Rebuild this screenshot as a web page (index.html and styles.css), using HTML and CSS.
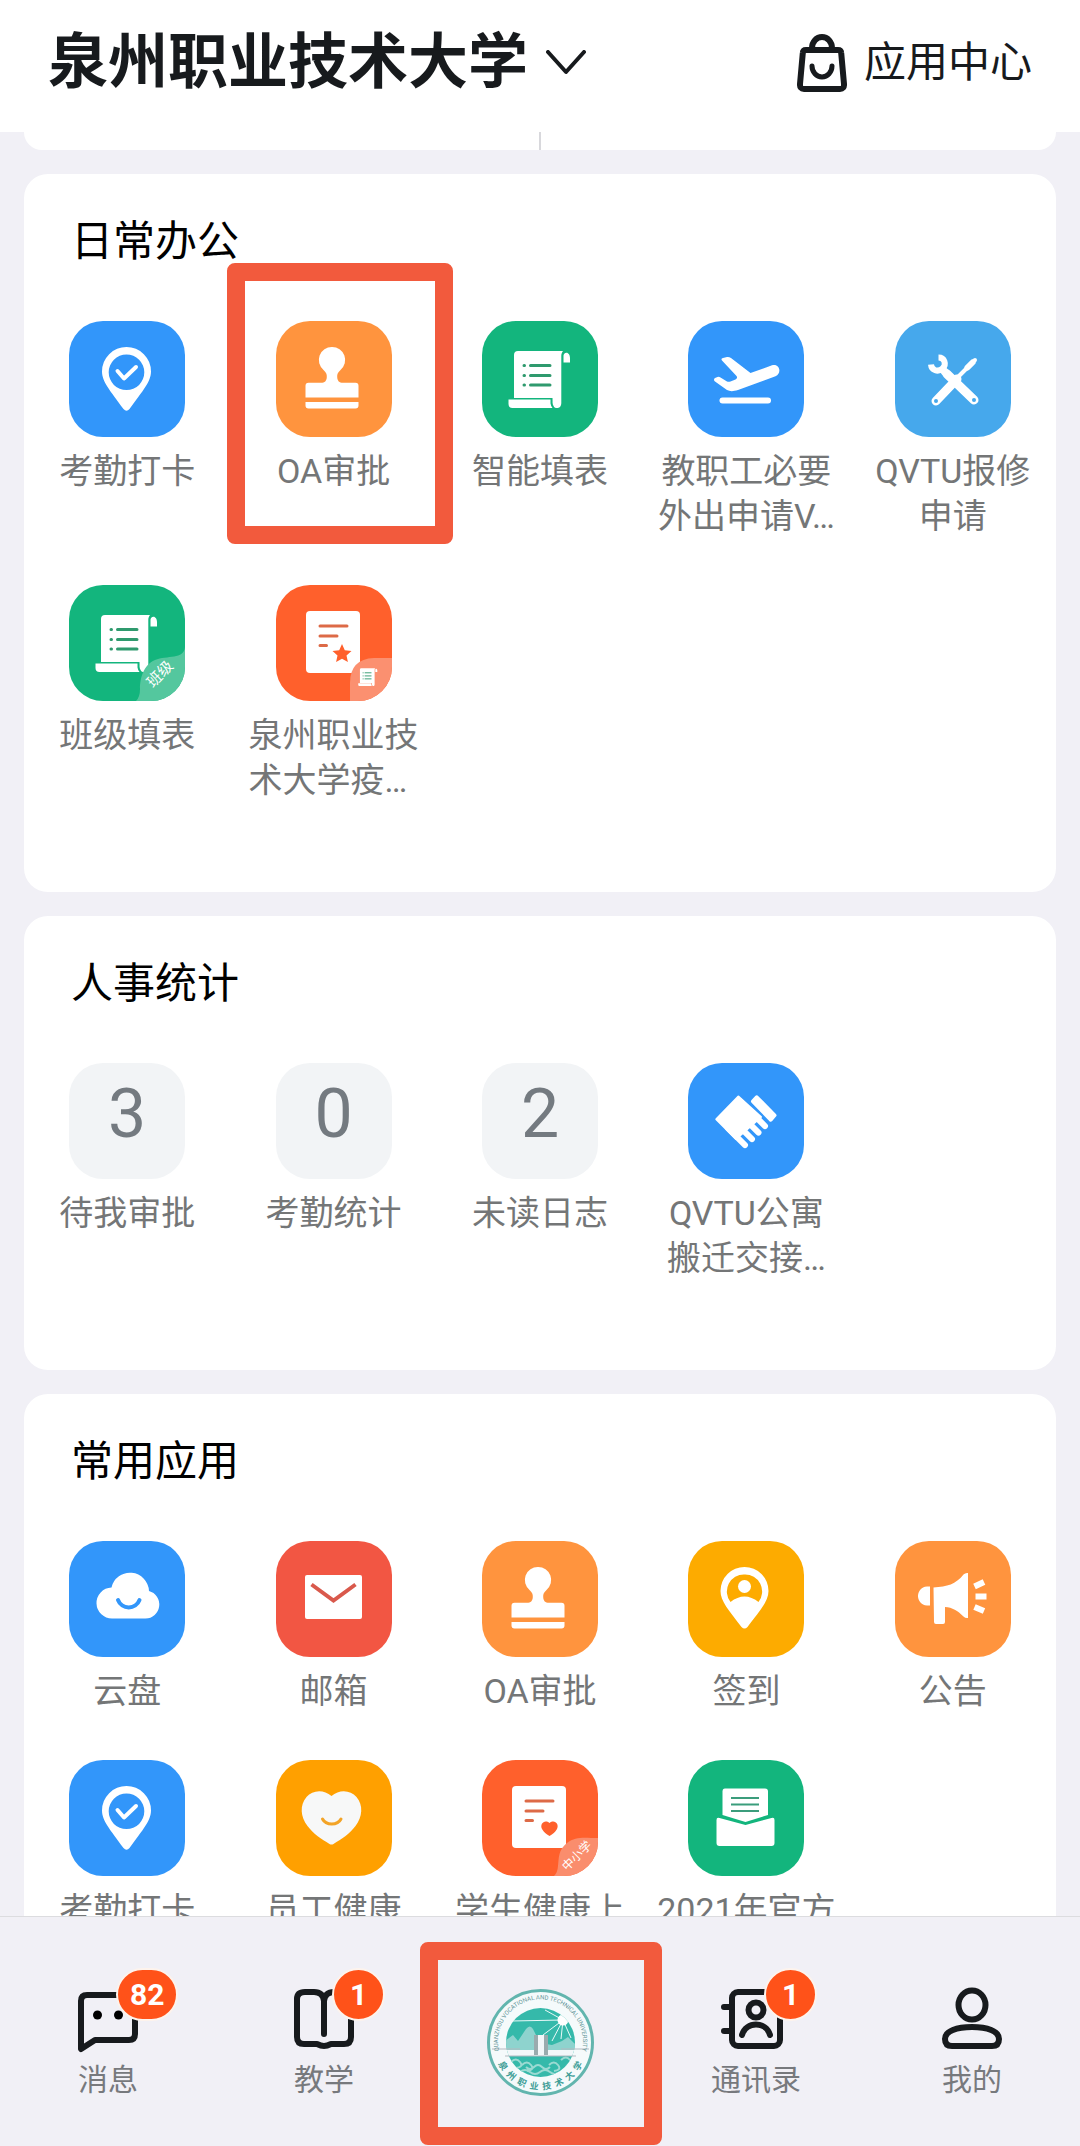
FILE: index.html
```html
<!DOCTYPE html>
<html lang="zh-CN">
<head>
<meta charset="utf-8">
<meta name="viewport" content="width=device-width, initial-scale=1">
<title>泉州职业技术大学</title>
<link rel="stylesheet" href="styles.css">
</head>
<body>
<svg class="sprite" aria-hidden="true">
  <symbol id="i-pin" viewBox="0 0 116 116">
    <path fill="#fff" fill-rule="evenodd" d="M57.500 26a24.500 24.500 0 0 1 24.500 24.500c0 10-8 19-21.500 37.500q-3 3.500-6 0C41 69.500 33 60.500 33 50.500A24.500 24.500 0 0 1 57.500 26zM57.500 33.500a17.800 17.800 0 1 0 0 35.600a17.800 17.800 0 0 0 0-35.600z"/>
    <path fill="none" stroke="#fff" stroke-width="4" stroke-linecap="round" stroke-linejoin="round" d="M48.500 50l6.500 7.500L67 46"/>
  </symbol>
  <symbol id="i-stamp" viewBox="0 0 116 116">
    <path fill="#fff" d="M56 26a13 13 0 0 1 8.500 23c-2.500 2.500-3.500 4-3.300 7 .2 4 2 5.800 5.800 5.800h12.500q3 0 3 3v11.700h-53V64.800q0-3 3-3H45c3.800 0 5.600-1.800 5.800-5.800 .2-3-.8-4.500-3.300-7A13 13 0 0 1 56 26zM29.500 81h53v3.500q0 3-3 3h-47q-3 0-3-3z"/>
  </symbol>
  <symbol id="i-scroll" viewBox="0 0 116 116">
    <path fill="#fff" d="M36 30h45c-1 1-1.700 3-1.700 5v47c0 6-6 6-7.500 3.500-1.800-2.500-1-5-1.300-8.500H32V34q0-4 4-4zM82 33c3-3 6 0 6 4v4.500h-6.500V34.500zM26.500 78.500h42v4q.5 3 2 4.500H30.500q-4 0-4-4z"/>
    <path fill="none" stroke="#2f9a6e" stroke-width="3" stroke-linecap="round" d="M42 44.500h.5M42 54.500h.5M42 64h.5M48.500 44.500h19.500M48.500 54.500h19.500M48.500 64h19.500"/>
  </symbol>
</svg>
<div class="app">
  <header class="header">
    <h1 class="header-title">
      <button class="org" type="button">泉州职业技术大学
        <svg class="org-arrow" viewBox="0 0 40 26" aria-hidden="true"><path d="M2 2l18 20L38 2" fill="none" stroke="currentColor" stroke-width="4" stroke-linecap="round" stroke-linejoin="round"/></svg>
      </button>
    </h1>
    <a class="center-link" href="#apps">
      <svg class="bag" viewBox="0 0 50 58" aria-hidden="true"><g fill="none" stroke="currentColor" stroke-width="6" stroke-linejoin="round" stroke-linecap="round"><path d="M9 16h32q3 0 3.200 3L47 50q.3 5-4 5H7q-4.300 0-4-5L5.800 19Q6 16 9 16zM15 16v-2a10 11 0 0 1 20 0v2"/><path stroke-width="5" d="M15 32a10 11 0 0 0 20 0"/></g></svg>
      应用中心
    </a>
  </header>

  <main class="content">
    <div class="card-tail"><span class="card-tail-line"></span></div>

    <section class="card">
      <h2 class="card-title">日常办公</h2>
      <ul class="grid">
        <li class="cell"><a class="item" href="#"><svg class="tile blue"><use href="#i-pin"/></svg><span class="label">考勤打卡</span></a></li>
        <li class="cell"><a class="item" href="#"><svg class="tile orange"><use href="#i-stamp"/></svg><span class="label">OA审批</span></a><span class="mark mark-cell"></span></li>
        <li class="cell"><a class="item" href="#"><svg class="tile green"><use href="#i-scroll"/></svg><span class="label">智能填表</span></a></li>
        <li class="cell"><a class="item" href="#"><svg class="tile blue" viewBox="0 0 116 116"><path fill="#fff" d="M34 39.500q-1.500-2 1-2.500l4-1q2-.4 4 1L62.500 52 84 44.300c8-2 10 8 3.500 11L50 69c-5 1.500-8 1.500-11 0L27 60.500q-2-2 0-3.500l2.500-1q1.500-.4 3 .4l6.500 4q1.500.8 3.500 0l5-2q2.500-1 1-3.400z"/><path stroke="#fff" stroke-width="6" stroke-linecap="round" d="M34.500 79.500h45.500"/></svg><span class="label">教职工必要<br>外出申请V…</span></a></li>
        <li class="cell"><a class="item" href="#"><svg class="tile sky" viewBox="0 0 116 116"><g fill="none" stroke="#fff" stroke-linecap="round"><path stroke-width="9" d="M52 53l27 26M41 80l21-22"/><path stroke-width="4" d="M59 60l21-21"/><path stroke-width="6" d="M72.500 46.500l5-5"/><path stroke-width="6" stroke-linecap="butt" d="M43.500 36.500c6 0 8.500 7 4 11s-11 2-11.500-4"/><path stroke-width="8" d="M50 51l4 4"/></g><circle cx="79" cy="79" r="2" fill="#46a8ec"/><circle cx="41" cy="80" r="2" fill="#46a8ec"/></svg><span class="label">QVTU报修<br>申请</span></a></li>
        <li class="cell"><a class="item" href="#"><svg class="tile green" viewBox="0 0 116 116"><use href="#i-scroll" width="116" height="116"/><path fill="#54c79e" d="M116 62C115 75 98 70 86 75S71 94 71 104q0 8-4 12h49z"/><text class="ribbon" x="91" y="94" font-size="15" transform="rotate(-45 91 89)">班级</text></svg><span class="label">班级填表</span></a></li>
        <li class="cell"><a class="item" href="#"><svg class="tile coral" viewBox="0 0 116 116"><rect x="30" y="26" width="54" height="62" rx="4" fill="#fff"/><path stroke="#dd6a47" stroke-width="3" stroke-linecap="round" d="M44 41h27M44 51h17M44 60.500h6.500"/><path fill="#ff602c" d="M66 59l2.800 6.200 6.700.7-5 4.600 1.400 6.600-5.900-3.400-5.900 3.400 1.400-6.600-5-4.600 6.700-.7z"/><path fill="#fb9070" d="M116 73H98Q74 74 74 98v18h42z"/><use href="#i-scroll" x="74" y="74" width="36" height="36"/></svg><span class="label label-left">泉州职业技<br>术大学疫…</span></a></li>
      </ul>
    </section>

    <section class="card">
      <h2 class="card-title">人事统计</h2>
      <ul class="grid">
        <li class="cell"><a class="item" href="#"><span class="tile count">3</span><span class="label">待我审批</span></a></li>
        <li class="cell"><a class="item" href="#"><span class="tile count">0</span><span class="label">考勤统计</span></a></li>
        <li class="cell"><a class="item" href="#"><span class="tile count">2</span><span class="label">未读日志</span></a></li>
        <li class="cell"><a class="item" href="#"><svg class="tile blue" viewBox="0 0 116 116"><path fill="#fff" stroke="#fff" stroke-width="2" stroke-linejoin="round" d="M50.400 33.500L28.300 56.300 48 76l25-22z"/><path stroke="#fff" stroke-width="6" stroke-linecap="round" d="M40 65.100l17 17M47 59.100l17 17M54 53.100l16.500 16.500M52 38.100l25 25"/><path fill="#fff" stroke="#fff" stroke-width="4" stroke-linejoin="round" d="M65 38.300l3.700-4 17.800 18-3.800 4.400z"/></svg><span class="label">QVTU公寓<br>搬迁交接…</span></a></li>
      </ul>
    </section>

    <section class="card">
      <h2 class="card-title">常用应用</h2>
      <ul class="grid">
        <li class="cell"><a class="item" href="#"><svg class="tile blue" viewBox="0 0 116 116"><path fill="#fff" d="M43.500 77.500a15.500 15.500 0 0 1-1-31 19 19 0 0 1 37.500 3.500 14 14 0 0 1-3.500 27.500z"/><path fill="none" stroke="#3296fa" stroke-width="4" stroke-linecap="round" d="M49 59a11.500 11.500 0 0 0 21.500 0"/></svg><span class="label">云盘</span></a></li>
        <li class="cell"><a class="item" href="#"><svg class="tile red" viewBox="0 0 116 116"><rect x="29" y="34" width="57" height="44" rx="2" fill="#fff"/><path fill="none" stroke="#d9594c" stroke-width="4" d="M35.500 43.500l22 16 22-16"/></svg><span class="label">邮箱</span></a></li>
        <li class="cell"><a class="item" href="#"><svg class="tile orange"><use href="#i-stamp"/></svg><span class="label">OA审批</span></a></li>
        <li class="cell"><a class="item" href="#"><svg class="tile amber" viewBox="0 0 116 116"><path fill="#fff" fill-rule="evenodd" d="M56.500 26a24 24 0 0 1 24 24c0 10-8 19-21 36q-3 3-6 0c-13-17-21-26-21-36a24 24 0 0 1 24-24zM56.500 33.500A17 17 0 0 0 42.500 61q14-11 28 0a17 17 0 0 0-14-27.500z"/><circle cx="56.500" cy="45.500" r="6.500" fill="#fff"/></svg><span class="label">签到</span></a></li>
        <li class="cell"><a class="item" href="#"><svg class="tile orange" viewBox="0 0 116 116"><path fill="#fff" d="M35 45.500v19h-3c-12-1-12-18 0-19zM38.500 46.500c14-1 22-3 30-13q2-2 4.500-1.500v45q-2.500.5-4.500-1.500c-6-6-11-9-18.500-9.500v15q0 2-2 2h-7q-2 0-2-2z"/><path stroke="#fff" stroke-width="6" d="M79.500 45.500l9.500-4.500M80.500 55.500h11M79.500 66l9.500 4"/></svg><span class="label">公告</span></a></li>
        <li class="cell"><a class="item" href="#"><svg class="tile blue"><use href="#i-pin"/></svg><span class="label">考勤打卡</span></a></li>
        <li class="cell"><a class="item" href="#"><svg class="tile gold" viewBox="0 0 116 116"><path fill="#f7f8f8" d="M55.500 36c8-7 19-6 25 1 7 8 6 20-1 29-6 8-14 13-22 18q-2 1-4 0c-8-5-16-10-22-18-7-9-8-21-1-29 6-7 17-8 25-1z"/><path fill="none" stroke="#f3a427" stroke-width="3" stroke-linecap="round" d="M46.500 59a10 8 0 0 0 18.500 0"/></svg><span class="label">员工健康</span></a></li>
        <li class="cell"><a class="item" href="#"><svg class="tile coral" viewBox="0 0 116 116"><rect x="30" y="26" width="54" height="62" rx="4" fill="#fff"/><path stroke="#dd6a47" stroke-width="3" stroke-linecap="round" d="M44 41h27M44 51h17M44 60.500h6.500"/><path fill="#ff602c" d="M67.500 63c5-4 10 1 7.500 6-2 3.500-4 5-7.500 7-3.500-2-5.500-3.500-7.500-7-2.500-5 2.500-10 7.500-6z"/><path fill="#fa8d6d" d="M116 78c-14 0-22-2-31 5s-8 15-9 23q-.5 7-4 10h44z"/><text class="ribbon" x="95" y="100" font-size="12" transform="rotate(-45 95 96)">中小学</text></svg><span class="label">学生健康上</span></a></li>
        <li class="cell"><a class="item" href="#"><svg class="tile green" viewBox="0 0 116 116"><path fill="#fff" d="M37 28.500h40q3 0 3 3V55l-22.500 7L34.500 55V31.500q0-3 2.500-3z"/><path stroke="#3b9d7c" stroke-width="2" d="M43 38h28M43 44.500h28M43 51h28"/><path fill="#fff" d="M28.500 60q0-3 3-2l26 7 26-7q3-1 3 2v23q0 3-3 3h-52q-3 0-3-3z"/></svg><span class="label">2021年官方</span></a></li>
      </ul>
    </section>
  </main>

  <nav class="tabs">
    <a class="tab" href="#"><svg class="tab-icon" viewBox="0 0 60 60" aria-hidden="true"><path fill="none" stroke="currentColor" stroke-width="6" stroke-linejoin="round" d="M3 60V12q0-6 6-6h42q6 0 6 6v33q0 6-6 6H17z"/><circle cx="19.500" cy="26" r="4.500"/><circle cx="40.500" cy="26" r="4.500"/></svg><span class="badge">82</span><span class="tab-label">消息</span></a>
    <a class="tab" href="#"><svg class="tab-icon" viewBox="0 0 60 60" aria-hidden="true"><path fill="none" stroke="currentColor" stroke-width="6" stroke-linejoin="round" stroke-linecap="round" d="M30 45V12q-1-9-10-9h-9Q3 3 3 10v38q0 7 7 7h13q4 2 7 2t7-2h13q7 0 7-7V10q0-7-7-7H40q-9 0-10 9"/></svg><span class="badge">1</span><span class="tab-label">教学</span></a>
    <a class="tab tab-home" href="#" aria-label="泉州职业技术大学">
      <svg class="seal" viewBox="0 0 107 107">
        <defs>
          <path id="arc-top" d="M12.500 64A42.500 42.500 0 1 1 94.500 64"/>
          <path id="arc-bottom" d="M6.500 60A47.500 47.500 0 0 0 100.500 60"/>
          <clipPath id="disc"><circle cx="53.500" cy="53.500" r="34.500"/></clipPath>
        </defs>
        <circle cx="53.500" cy="53.500" r="52" fill="#f5fafb" stroke="#62b5ae" stroke-width="3"/>
        <g clip-path="url(#disc)">
          <path fill="#35b9aa" d="M18 18h72v72H18z"/>
          <path fill="#8ed3ce" d="M18 62V52l8-6 5 6 8-12q4-5 7 0l7 14 12 2 10-4 6-4 8 8v8z"/>
          <path stroke="#e9f8f8" d="M76 31L24 32M76 31L58 21M76 31L56 46M76 31L65 52M76 31L74 50M76 31l8 18"/>
          <circle cx="76" cy="31" r="5.500" fill="#fff"/>
          <path fill="#f2f7f9" d="M18 61h30V46h12v15h30v6H18z"/>
          <path fill="#9aabae" d="M47 46h4v20h-4zM57 46h4v20h-4z"/>
          <path fill="none" stroke="#9bdad2" stroke-width="2" d="M24 73q5-5 9 0t-4 6M35 76q5-5 9 0t-4 6M62 76q5-5 9 0t-4 6M74 71q5-5 9 0t-4 6M33 83q5-4 10 0t10 0 10 0 10 0M39 78q4 4 8 0t8 0 8 0"/>
        </g>
        <path stroke="#b3b9c0" d="M5 60h28M74 60h28M18 67h71"/>
        <text class="seal-en"><textPath href="#arc-top" startOffset="50%">QUANZHOU VOCATIONAL AND TECHNICAL UNIVERSITY</textPath></text>
        <text class="seal-zh"><textPath href="#arc-bottom" startOffset="50%">泉&#8194;州&#8194;职&#8194;业&#8194;技&#8194;术&#8194;大&#8194;学</textPath></text>
      </svg>
      <span class="mark mark-tab"></span>
    </a>
    <a class="tab" href="#"><svg class="tab-icon" viewBox="0 0 60 60" aria-hidden="true"><g fill="none" stroke="currentColor" stroke-width="6" stroke-linecap="round"><rect x="6" y="3" width="48" height="54" rx="6"/><path d="M-2 18h7M-2 42h7M16 46c4-14 24-14 28 0"/><ellipse cx="30" cy="21" rx="7.500" ry="7.500"/></g></svg><span class="badge">1</span><span class="tab-label">通讯录</span></a>
    <a class="tab" href="#"><svg class="tab-icon" viewBox="0 0 60 60" aria-hidden="true"><g fill="none" stroke="currentColor" stroke-width="6"><ellipse cx="30" cy="16" rx="13.500" ry="14.500"/><path d="M10 57h40q7 0 7-7c0-8-12-12-27-12S3 42 3 50q0 7 7 7z"/></g></svg><span class="tab-label">我的</span></a>
  </nav>
</div>
</body>
</html>
```
FILE: styles.css
```css
* {
  box-sizing: border-box;
}

body {
  margin: 0;
  background: #f1f0f6;
  color: #171a1d;
  font-family: Roboto, "Noto Sans CJK SC", sans-serif;
}

a {
  color: inherit;
  text-decoration: none;
}

.sprite {
  position: absolute;
  width: 0;
  height: 0;
}

.app {
  display: flex;
  flex-direction: column;
  height: 100vh;
}

/* Header */
.header {
  display: flex;
  align-items: center;
  justify-content: space-between;
  flex: none;
  padding: 18px 48px 24px;
  background: #fff;
}

.header-title {
  margin: 0;
}

.org {
  display: flex;
  align-items: center;
  gap: 18px;
  padding: 0;
  border: 0;
  background: none;
  color: inherit;
  font: inherit;
  font-size: 60px;
  font-weight: 700;
  line-height: 90px;
}

.org-arrow {
  width: 40px;
  height: 26px;
}

.center-link {
  display: flex;
  align-items: center;
  gap: 17px;
  font-size: 42px;
  line-height: 60px;
}

.bag {
  width: 50px;
  height: 58px;
}

/* Scrolling content */
.content {
  display: flex;
  flex-direction: column;
  gap: 24px;
  flex: 1;
  min-height: 0;
  padding: 0 24px;
  overflow: hidden;
}

.card-tail {
  display: flex;
  justify-content: center;
  flex: none;
  height: 18px;
  border-radius: 0 0 24px 24px;
  background: #fff;
}

.card-tail-line {
  width: 2px;
  background: #d8d8dc;
}

.card {
  flex: none;
  padding: 38px 0 89px;
  border-radius: 24px;
  background: #fff;
}

.card-title {
  margin: 0 47px 49px;
  color: #000;
  font-size: 42px;
  font-weight: 400;
  line-height: 60px;
}

.grid {
  display: grid;
  grid-template-columns: repeat(5, 1fr);
  row-gap: 46px;
  margin: 0;
  padding: 0;
  list-style: none;
}

.cell {
  position: relative;
}

.item {
  display: flex;
  flex-direction: column;
  align-items: center;
  gap: 12px;
}

.tile {
  width: 116px;
  height: 116px;
  border-radius: 34px;
}

.blue { background: #3296fa; }
.sky { background: #46a8ec; }
.orange { background: #ff943e; }
.green { background: #13b57d; }
.coral { background: #ff602c; }
.red { background: #f25643; }
.amber { background: #fdab00; }
.gold { background: #ffa000; }

.count {
  padding-bottom: 14px;
  background: #f2f4f6;
  color: #747a80;
  font-size: 68px;
  line-height: 102px;
  text-align: center;
}

.label {
  color: #747677;
  font-size: 34px;
  line-height: 45px;
  text-align: center;
  white-space: nowrap;
}

.label-left {
  text-align: left;
}

.ribbon {
  fill: #fff;
  text-anchor: middle;
}

/* Red highlight frames */
.mark {
  position: absolute;
  border: 18px solid #f25a3d;
  border-radius: 8px;
  pointer-events: none;
}

.mark-cell {
  inset: -58px -16px -5px -3px;
}

.mark-tab {
  inset: 25px -14px 1px -12px;
}

/* Bottom tabs */
.tabs {
  display: flex;
  flex: none;
  border-top: 1px solid #dcdcdf;
  background: #f1f0f6;
}

.tab {
  position: relative;
  display: flex;
  flex: 1;
  flex-direction: column;
  align-items: center;
  gap: 8px;
  padding: 72px 0 44px;
}

.tab-home {
  padding-bottom: 0;
}

.tab-icon {
  width: 60px;
  height: 60px;
  overflow: visible;
}

.tab-label {
  color: #77797d;
  font-size: 30px;
  line-height: 45px;
}

.badge {
  position: absolute;
  top: 51px;
  left: calc(50% + 8px);
  min-width: 53px;
  padding: 0 12px;
  border: 2px solid #fdf3ec;
  border-radius: 27px;
  background: #ff5219;
  color: #fff;
  font-size: 30px;
  font-weight: 700;
  line-height: 49px;
  text-align: center;
}

.seal {
  width: 107px;
  height: 107px;
}

.seal-en {
  fill: #5f9497;
  font-size: 6px;
  text-anchor: middle;
}

.seal-zh {
  fill: #3f9e97;
  font-size: 9px;
  font-weight: 700;
  text-anchor: middle;
}
```
